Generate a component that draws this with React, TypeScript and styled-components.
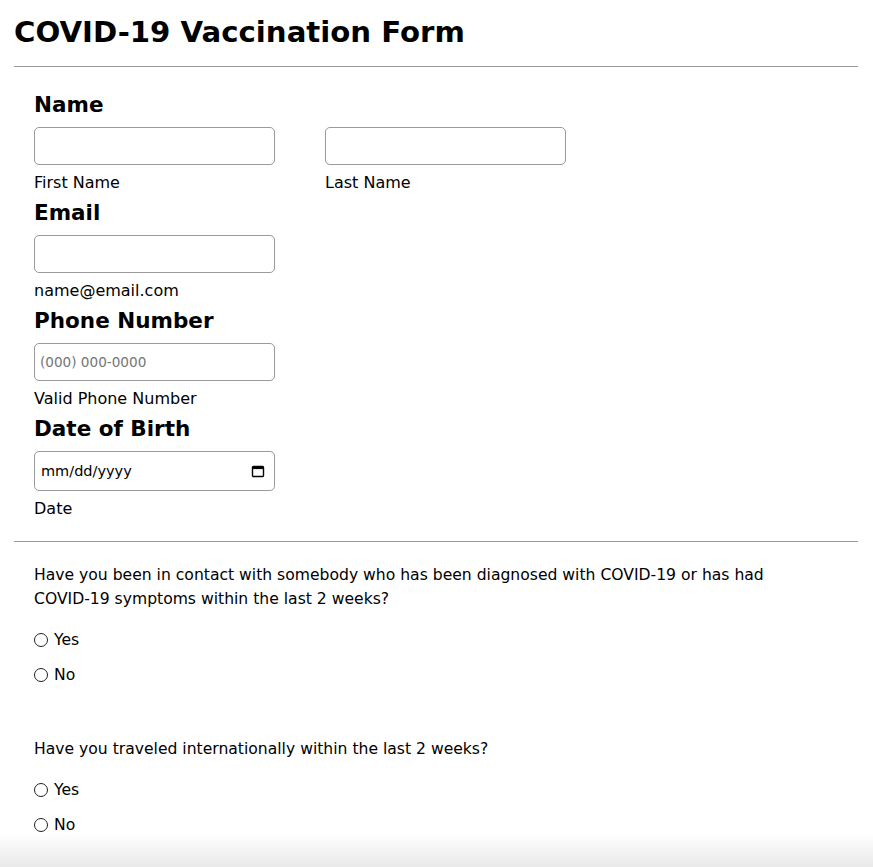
import React from "react";
import styled, { createGlobalStyle } from "styled-components";

const GlobalStyle = createGlobalStyle`
  body {
    margin: 0;
    background: #ffffff;
    color: #000000;
    font-family: "DejaVu Sans", "Liberation Sans", sans-serif;
  }
`;

const Page = styled.main`
  padding: 0 15px 60px 14px;
`;

const Title = styled.h1`
  margin: 0;
  padding-top: 12px;
  font-size: 29.2px;
  line-height: 40px;
  font-weight: 700;
`;

const Divider = styled.hr<{ $top?: number }>`
  margin: ${(p) => p.$top ?? 0}px 0 0;
  border: 0;
  border-top: 1px solid #9a9a9a;
`;

const Section = styled.section<{ $top: number; $bottom: number }>`
  padding: ${(p) => p.$top}px 20px ${(p) => p.$bottom}px;
`;

const Field = styled.div`
  & + & {
    margin-top: 5px;
  }
`;

const FieldLabel = styled.h2`
  margin: 0;
  font-size: 21.5px;
  line-height: 30px;
  font-weight: 700;
`;

const Row = styled.div`
  display: flex;
  gap: 50px;
`;

const Column = styled.div`
  display: flex;
  flex-direction: column;
`;

const TextInput = styled.input`
  box-sizing: border-box;
  width: 241px;
  height: 38px;
  margin-top: 7px;
  padding: 0 5px;
  border: 1px solid #9a9a9a;
  border-radius: 5px;
  font-family: inherit;
  font-size: 13.6px;
  color: #000;
  background: #fff;

  &::placeholder {
    color: #767676;
  }
`;

const DateBox = styled.div`
  box-sizing: border-box;
  width: 241px;
  height: 40px;
  margin-top: 7px;
  padding: 0 9px 0 6px;
  border: 1px solid #9a9a9a;
  border-radius: 5px;
  display: flex;
  align-items: center;
  justify-content: space-between;
  font-size: 14.5px;
`;

const Hint = styled.span`
  margin-top: 8px;
  font-size: 16px;
  line-height: 20px;
`;

const Question = styled.fieldset`
  margin: 0;
  padding: 0;
  border: 0;
  & + & {
    margin-top: 50px;
  }
`;

const Prompt = styled.p`
  margin: 0 0 17px;
  font-size: 15.6px;
  line-height: 24px;
  max-width: 790px;
`;

const Choice = styled.label`
  display: flex;
  align-items: center;
  height: 24px;
  font-size: 15.6px;
  & + & {
    margin-top: 11px;
  }
`;

const Radio = styled.span`
  box-sizing: border-box;
  width: 14px;
  height: 14px;
  border: 1px solid #222;
  border-radius: 50%;
  margin-right: 6px;
`;

const BottomFade = styled.div`
  position: fixed;
  left: 0;
  right: 0;
  bottom: 0;
  height: 34px;
  pointer-events: none;
  background: linear-gradient(to bottom, rgba(235, 235, 235, 0), #e9e9e9);
`;

const CalendarIcon = () => (
  <svg width="14" height="14" viewBox="0 0 14 14" fill="none">
    <rect x="1.5" y="2.5" width="11" height="10" rx="1" stroke="#000" strokeWidth="1.4" />
    <rect x="1.5" y="2.5" width="11" height="2.6" fill="#000" />
  </svg>
);

const questions = [
  "Have you been in contact with somebody who has been diagnosed with COVID-19 or has had COVID-19 symptoms within the last 2 weeks?",
  "Have you traveled internationally within the last 2 weeks?",
];

export default function App() {
  return (
    <>
      <GlobalStyle />
      <Page>
        <Title>COVID-19 Vaccination Form</Title>
        <Divider $top={14} />
        <Section $top={23} $bottom={22}>
          <Field>
            <FieldLabel>Name</FieldLabel>
            <Row>
              <Column>
                <TextInput type="text" />
                <Hint>First Name</Hint>
              </Column>
              <Column>
                <TextInput type="text" />
                <Hint>Last Name</Hint>
              </Column>
            </Row>
          </Field>
          <Field>
            <FieldLabel>Email</FieldLabel>
            <Column>
              <TextInput type="email" />
              <Hint>name@email.com</Hint>
            </Column>
          </Field>
          <Field>
            <FieldLabel>Phone Number</FieldLabel>
            <Column>
              <TextInput type="tel" placeholder="(000) 000-0000" />
              <Hint>Valid Phone Number</Hint>
            </Column>
          </Field>
          <Field>
            <FieldLabel>Date of Birth</FieldLabel>
            <Column>
              <DateBox>
                <span>mm/dd/yyyy</span>
                <CalendarIcon />
              </DateBox>
              <Hint>Date</Hint>
            </Column>
          </Field>
        </Section>
        <Divider />
        <Section $top={21} $bottom={20}>
          {questions.map((q) => (
            <Question key={q}>
              <Prompt>{q}</Prompt>
              <Choice>
                <Radio />
                Yes
              </Choice>
              <Choice>
                <Radio />
                No
              </Choice>
            </Question>
          ))}
        </Section>
      </Page>
      <BottomFade />
    </>
  );
}
